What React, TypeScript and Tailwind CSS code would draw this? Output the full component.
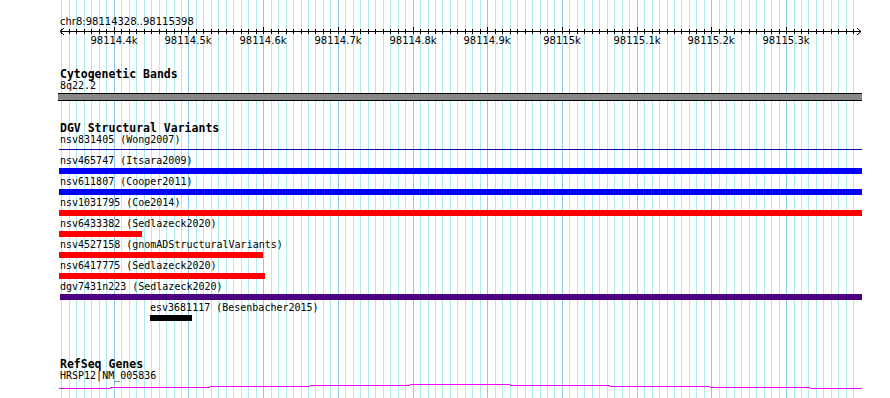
const START = 98114328;
const END = 98115398;
const scale = 800 / (END - START + 1);
const px = (bp: number) => Math.round(60 + (bp - START) * scale);

const grid = Array.from({ length: 107 }, (_, k) => 98114330 + k * 10);
const majors = grid.filter((bp) => bp % 100 === 0);

const label = (bp: number) => {
  const k = bp / 1000;
  return `${Number.isInteger(k) ? k : k.toFixed(1)}k`;
};

const variants = [
  { name: "nsv465747 (Itsara2009)", color: "bg-[#0000ff]", left: 0, width: 803 },
  { name: "nsv611807 (Cooper2011)", color: "bg-[#0000ff]", left: 0, width: 803 },
  { name: "nsv1031795 (Coe2014)", color: "bg-[#ff0000]", left: 0, width: 803 },
  { name: "nsv6433382 (Sedlazeck2020)", color: "bg-[#ff0000]", left: 0, width: 83 },
  { name: "nsv4527158 (gnomADStructuralVariants)", color: "bg-[#ff0000]", left: 0, width: 204 },
  { name: "nsv6417775 (Sedlazeck2020)", color: "bg-[#ff0000]", left: 0, width: 206 },
  { name: "dgv7431n223 (Sedlazeck2020)", color: "bg-[#4b0082]", left: 1, width: 802 },
  { name: "esv3681117 (Besenbacher2015)", color: "bg-black", left: 91, width: 42 },
];

// exon-ish steps of the refseq wiggle
const steps = [
  [59, 110, 5],
  [110, 210, 4],
  [210, 310, 3],
  [310, 410, 2],
  [410, 510, 1],
  [510, 610, 2],
  [610, 710, 3],
  [710, 810, 4],
  [810, 862, 5],
];

function Gridlines() {
  return (
    <svg className="absolute inset-0" width={890} height={398}>
      {grid.map((bp) => (
        <rect
          key={bp}
          x={px(bp)}
          y={0}
          width={1}
          height={398}
          fill={bp % 100 === 0 ? "#8ccaea" : "#aeeaee"}
        />
      ))}
    </svg>
  );
}

function Ruler() {
  return (
    <svg width={890} height={52} className="block">
      <text
        x={60}
        y={25}
        fontSize={10}
        fontFamily="'DejaVu Sans', sans-serif"
        fill="#000"
      >
        chr8:98114328..98115398
      </text>
      <rect x={60} y={31} width={801} height={1} fill="#000" />
      {grid.map((bp) => (
        <rect
          key={bp}
          x={px(bp)}
          y={bp % 100 === 0 ? 27 : 29}
          width={1}
          height={bp % 100 === 0 ? 7 : 5}
          fill="#000"
        />
      ))}
      <polyline points="64,28 60,31.5 64,35" fill="none" stroke="#000" strokeWidth={1} />
      <polyline points="857,28 861,31.5 857,35" fill="none" stroke="#000" strokeWidth={1} />
      {majors.map((bp) => (
        <text
          key={bp}
          x={px(bp)}
          y={44}
          textAnchor="middle"
          fontSize={10}
          fontFamily="'DejaVu Sans', sans-serif"
          fill="#000"
        >
          {label(bp)}
        </text>
      ))}
    </svg>
  );
}

function TrackTitle({ children, className = "" }: { children: string; className?: string }) {
  return (
    <p className={`pl-px h-[12px] leading-[12px] text-[11.5px] font-bold text-black whitespace-nowrap ${className}`}>
      {children}
    </p>
  );
}

function FeatureLabel({ children, className = "" }: { children: string; className?: string }) {
  return (
    <p className={`h-[12px] leading-[12px] text-[10px] text-black whitespace-nowrap ${className}`}>
      {children}
    </p>
  );
}

export default function App() {
  return (
    <div className="relative w-[890px] h-[398px] overflow-hidden bg-white font-['DejaVu_Sans_Mono',monospace]">
      <Gridlines />

      <div className="relative flex flex-col">
        <Ruler />

        {/* Cytogenetic bands */}
        <div className="pl-[59px] mt-[16px] flex flex-col">
          <TrackTitle>Cytogenetic Bands</TrackTitle>
          <FeatureLabel className="pl-px">8q22.2</FeatureLabel>
          <div className="-ml-px mt-[1px] w-[804px] h-[8px] bg-[#888888] border-y border-black" />
        </div>

        {/* DGV */}
        <div className="pl-[59px] mt-[21px] flex flex-col">
          <TrackTitle>DGV Structural Variants</TrackTitle>
          <FeatureLabel className="pl-px">nsv831405 (Wong2007)</FeatureLabel>
          <div className="mt-[3px] w-[803px] h-px bg-[#0a0aa8]" />
          <div className="mt-[5px] flex flex-col gap-[2px]">
            {variants.map((v) => (
              <div key={v.name} className="flex flex-col">
                <FeatureLabel className={v.left > 1 ? "pl-[91px]" : "pl-px"}>{v.name}</FeatureLabel>
                <div
                  className={`mt-[1px] h-[6px] ${v.color}`}
                  style={{ marginLeft: v.left, width: v.width }}
                />
              </div>
            ))}
          </div>
        </div>

        {/* RefSeq */}
        <div className="pl-[59px] mt-[37px] flex flex-col">
          <TrackTitle>RefSeq Genes</TrackTitle>
          <FeatureLabel className="pl-px">HRSP12|NM_005836</FeatureLabel>
          <svg width={890} height={10} className="-ml-[59px] mt-[1px] block">
            {steps.map(([a, b, y]) => (
              <rect key={a} x={a} y={y} width={b - a} height={1} fill="#ff00ff" />
            ))}
          </svg>
        </div>
      </div>
    </div>
  );
}
